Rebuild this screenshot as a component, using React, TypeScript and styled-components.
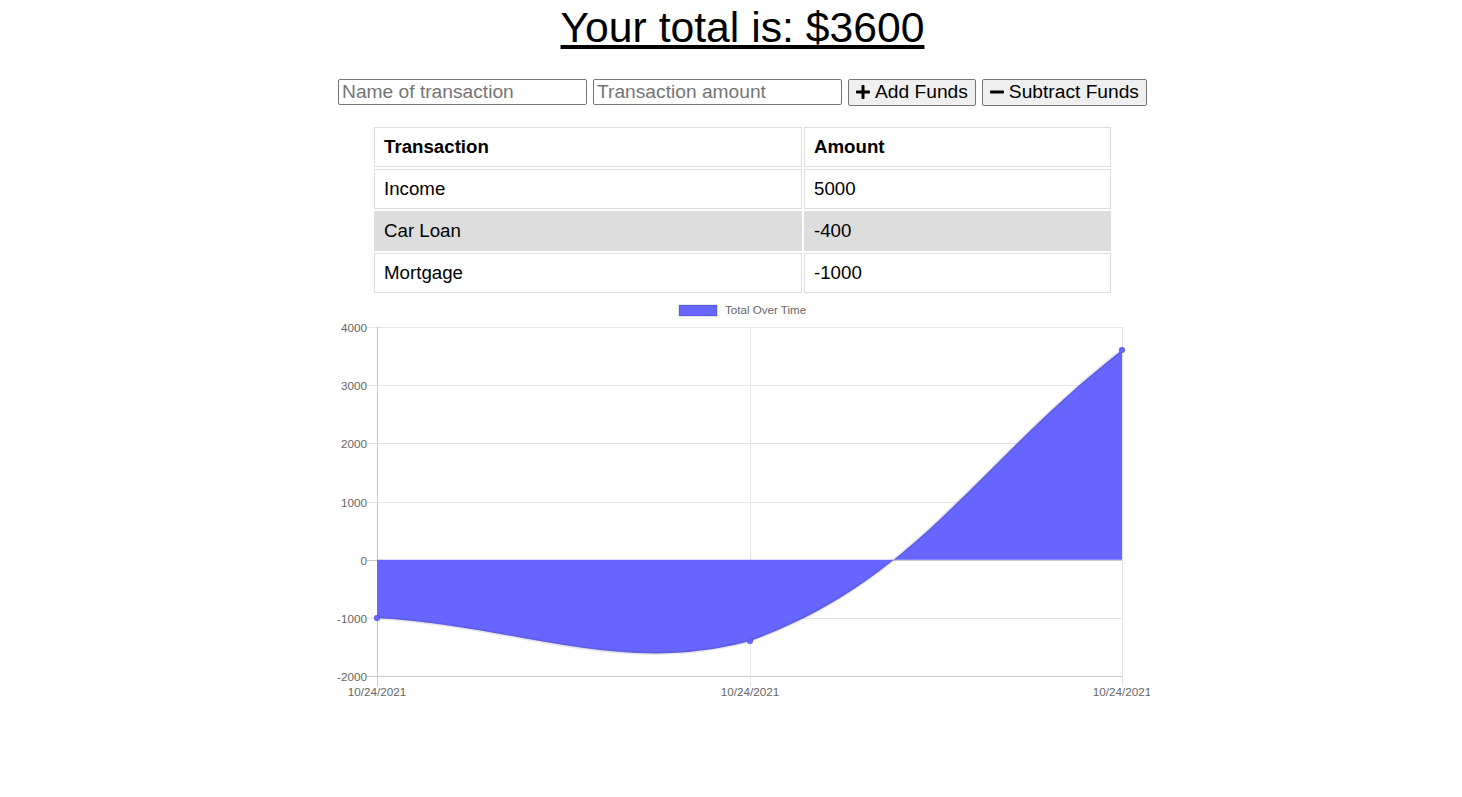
import React from "react";
import styled, { createGlobalStyle } from "styled-components";
import { FaPlus, FaMinus } from "react-icons/fa";

const GlobalStyle = createGlobalStyle`
  html, body { margin: 0; padding: 0; background: #fff; }
  body { font-family: "Liberation Sans", Arial, sans-serif; color: #000; }
`;

const Page = styled.div`
  display: flex;
  flex-direction: column;
  align-items: center;
  padding-left: 23px;
`;

const Title = styled.h1`
  margin: 3px 0 0;
  font-size: 42.7px;
  line-height: 48px;
  font-weight: normal;
  text-decoration: underline;
`;

const Form = styled.form`
  margin-top: 27px;
  height: 28px;
  display: flex;
  align-items: center;
  gap: 6px;
`;

const Input = styled.input`
  box-sizing: border-box;
  width: 249px;
  height: 26px;
  border: 1px solid #767676;
  border-radius: 2px;
  padding: 1px 3px;
  font-family: "Liberation Sans", Arial, sans-serif;
  font-size: 19.2px;
  &::placeholder { color: #757575; }
`;

const Button = styled.button`
  box-sizing: border-box;
  height: 27px;
  display: flex;
  align-items: center;
  gap: 5px;
  padding: 0 7px;
  background: #efefef;
  border: 1px solid #767676;
  border-radius: 2px;
  font-family: "Liberation Sans", Arial, sans-serif;
  font-size: 19.2px;
  color: #000;
  svg { width: 14px; height: 16px; }
`;

const Table = styled.table`
  margin-top: 19px;
  width: 741px;
  border-collapse: separate;
  border-spacing: 2px;
  font-size: 18.7px;
`;

const Cell = styled.td<{ $head?: boolean; $shaded?: boolean; $w?: number }>`
  box-sizing: border-box;
  height: 40px;
  padding: 0 9px;
  border: 1px solid #dddddd;
  vertical-align: middle;
  text-align: left;
  font-weight: ${(p) => (p.$head ? "bold" : "normal")};
  background: ${(p) => (p.$shaded ? "#dddddd" : "#fff")};
  width: ${(p) => (p.$w ? `${p.$w}px` : "auto")};
`;

const ChartSvg = styled.svg`
  display: block;
  margin-top: 3px;
  font-family: "Liberation Sans", Arial, sans-serif;
`;

const rows = [
  { name: "Income", amount: "5000" },
  { name: "Car Loan", amount: "-400" },
  { name: "Mortgage", amount: "-1000" },
];

const X0 = 42;
const X1 = 415;
const X2 = 787;
const yOf = (v: number) => 29 + ((4000 - v) / 1000) * 58.17;

function Chart() {
  const ticks = [4000, 3000, 2000, 1000, 0, -1000, -2000];
  const zero = yOf(0);
  const bottom = yOf(-2000);
  const curve = `M${X0},320 C191.2,329.2 283.4,378 ${X1},343 C581.4,283.2 638.2,168.4 ${X2},52`;
  return (
    <ChartSvg width={815} height={410} viewBox="0 0 815 410">
      <rect x={344} y={7} width={38} height={11} fill="#6666ff" stroke="rgba(0,0,0,0.1)" strokeWidth={2} />
      <text x={390} y={16} fontSize={11.6} fill="#666">Total Over Time</text>
      {ticks.map((t) => {
        const y = Math.round(yOf(t)) + 0.5;
        const strong = t === 0 || t === -2000;
        return (
          <g key={t}>
            <line x1={32} x2={X2} y1={y} y2={y} stroke={strong ? "#c8c8c8" : "#e5e5e5"} strokeWidth={1} />
            <text x={32} y={y + 4} fontSize={11.7} fill="#666" textAnchor="end">{t}</text>
          </g>
        );
      })}
      {[X0, X1, X2].map((x) => (
        <g key={x}>
          <line x1={x + 0.5} x2={x + 0.5} y1={29} y2={bottom + 10} stroke={x === X0 ? "#c8c8c8" : "#e5e5e5"} strokeWidth={1} />
          <text x={x} y={398} fontSize={11.7} fill="#666" textAnchor="middle">10/24/2021</text>
        </g>
      ))}
      <path d={`${curve} L${X2},${zero} L${X0},${zero} Z`} fill="#6666ff" />
      <path d={curve} fill="none" stroke="rgba(0,0,0,0.1)" strokeWidth={3} />
      {[[X0, 320], [X1, 343], [X2, 52]].map(([x, y]) => (
        <circle key={x} cx={x} cy={y} r={3} fill="#6666ff" stroke="rgba(0,0,0,0.1)" strokeWidth={1} />
      ))}
    </ChartSvg>
  );
}

export default function App() {
  return (
    <>
      <GlobalStyle />
      <Page>
        <Title>Your total is: $3600</Title>
        <Form onSubmit={(e) => e.preventDefault()}>
          <Input type="text" placeholder="Name of transaction" />
          <Input type="number" placeholder="Transaction amount" />
          <Button type="button"><FaPlus /> Add Funds</Button>
          <Button type="button"><FaMinus /> Subtract Funds</Button>
        </Form>
        <Table>
          <thead>
            <tr>
              <Cell as="th" $head $w={428}>Transaction</Cell>
              <Cell as="th" $head>Amount</Cell>
            </tr>
          </thead>
          <tbody>
            {rows.map((r, i) => (
              <tr key={r.name}>
                <Cell $shaded={i === 1}>{r.name}</Cell>
                <Cell $shaded={i === 1}>{r.amount}</Cell>
              </tr>
            ))}
          </tbody>
        </Table>
        <Chart />
      </Page>
    </>
  );
}
